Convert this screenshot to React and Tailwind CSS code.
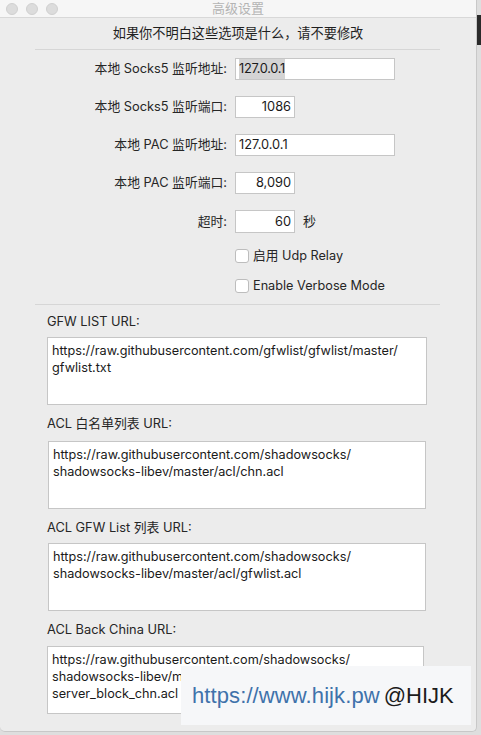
import React from "react";

const F = { fontFamily: 'Inter, "Noto Sans CJK SC", sans-serif' };

function Row({ label, value, wide, align = "left", sel, suffix, tall }) {
  return (
    <div className="flex items-center">
      <div className="w-[228px] text-right text-[12.8px] text-[#262626] pr-[1px]">{label}</div>
      <div
        className={`ml-[7px] ${wide ? "w-[160px]" : "w-[60px]"} ${tall ? "h-[23px]" : "h-[22px]"} bg-white border border-[#c6c6c6] flex items-center px-[3px] text-[12.8px] text-[#1a1a1a] ${align === "right" ? "justify-end" : ""}`}
      >
        {sel ? <span className="bg-[#d4d4d4] tracking-[-0.3px]">{value}</span> : value}
      </div>
      {suffix && <div className="ml-[8px] text-[13px] text-[#262626]">{suffix}</div>}
    </div>
  );
}

function Check({ label }) {
  return (
    <div className="flex items-center pl-[235px] h-[16px]">
      <div className="w-[14px] h-[14px] rounded-[3px] bg-white border border-[#bdbdbd]" />
      <div className="ml-[4px] text-[12.7px] text-[#262626]">{label}</div>
    </div>
  );
}

function Area({ label, lines, w = "w-[380px]", ml = "ml-[47px]", gap = "mt-[7px]" }) {
  return (
    <div>
      <div className="ml-[47px] h-[18px] flex items-center text-[12.8px] text-[#262626]">{label}</div>
      <div className={`${ml} ${w} ${gap} h-[68px] bg-white border border-[#c6c6c6] px-[4px] pt-[4px] text-[12.7px] leading-[17px] text-[#1a1a1a]`}>
        {lines.map((l, i) => (
          <div key={i}>{l}</div>
        ))}
      </div>
    </div>
  );
}

export default function App() {
  return (
    <div className="w-[481px] h-[735px] bg-[#dedede] flex overflow-hidden" style={F}>
      <div className="relative w-[477px] h-[732px] bg-[#ececec] rounded-b-[5px] border-r border-b border-[#c8c8c8] flex flex-col">
        <div className="h-[18px] bg-[#f6f6f6] border-b border-[#d8d8d8] flex items-center relative">
          <div className="flex gap-[8px] pl-[6px]">
            <div className="w-[12px] h-[12px] rounded-full bg-[#dcdcdc] border border-[#d0d0d0]" />
            <div className="w-[12px] h-[12px] rounded-full bg-[#dcdcdc] border border-[#d0d0d0]" />
            <div className="w-[12px] h-[12px] rounded-full bg-[#dcdcdc] border border-[#d0d0d0]" />
          </div>
          <div className="absolute inset-0 flex items-center justify-center text-[13px] text-[#b4b4b4]">高级设置</div>
        </div>
        <div className="h-[31px] flex items-center justify-center text-[13.2px] text-[#1f1f1f]">
          如果你不明白这些选项是什么，请不要修改
        </div>
        <div className="ml-[35px] w-[405px] h-[1px] bg-[#d6d6d6]" />
        <div className="mt-[8px] flex flex-col gap-[16px]">
          <Row label="本地 Socks5 监听地址:" value="127.0.0.1" wide sel />
          <Row label="本地 Socks5 监听端口:" value="1086" align="right" />
          <Row label="本地 PAC 监听地址:" value="127.0.0.1" wide />
          <Row label="本地 PAC 监听端口:" value="8,090" align="right" />
          <Row label="超时:" value="60" align="right" suffix="秒" tall />
        </div>
        <div className="mt-[15px] flex flex-col gap-[14px]">
          <Check label="启用 Udp Relay" />
          <Check label="Enable Verbose Mode" />
        </div>
        <div className="mt-[10px] ml-[35px] w-[405px] h-[1px] bg-[#d6d6d6]" />
        <div className="mt-[8px] flex flex-col gap-[10px]">
          <Area
            label="GFW LIST URL:"
            gap="mt-[6px]"
            lines={["https://raw.githubusercontent.com/gfwlist/gfwlist/master/", "gfwlist.txt"]}
          />
          <Area
            label="ACL 白名单列表 URL:"
            ml="ml-[48px]"
            w="w-[378px]"
            gap="mt-[8px]"
            lines={["https://raw.githubusercontent.com/shadowsocks/", "shadowsocks-libev/master/acl/chn.acl"]}
          />
          <Area
            label="ACL GFW List 列表 URL:"
            ml="ml-[48px]"
            w="w-[378px]"
            gap="mt-[6px]"
            lines={["https://raw.githubusercontent.com/shadowsocks/", "shadowsocks-libev/master/acl/gfwlist.acl"]}
          />
          <Area
            label="ACL Back China URL:"
            w="w-[377px]"
            gap="mt-[7px]"
            lines={[
              "https://raw.githubusercontent.com/shadowsocks/",
              "shadowsocks-libev/master/acl/",
              "server_block_chn.acl",
            ]}
          />
        </div>
        <div className="absolute left-[181px] top-[666px] w-[290px] h-[59px] bg-[#f6f7f9] flex items-center pl-[11px] text-[22px]" style={{ fontFamily: '"Liberation Sans", sans-serif' }}>
          <span className="text-[#3f72ab] tracking-[0.1px]">https://www.hijk.pw</span>
          <span className="ml-[4px] text-[#1c1c1c]">@HIJK</span>
        </div>
      </div>
      <div className="flex-1 flex flex-col">
        <div className="h-[15px]" />
        <div className="h-[30px] bg-[#2a2a2a]" />
      </div>
    </div>
  );
}
